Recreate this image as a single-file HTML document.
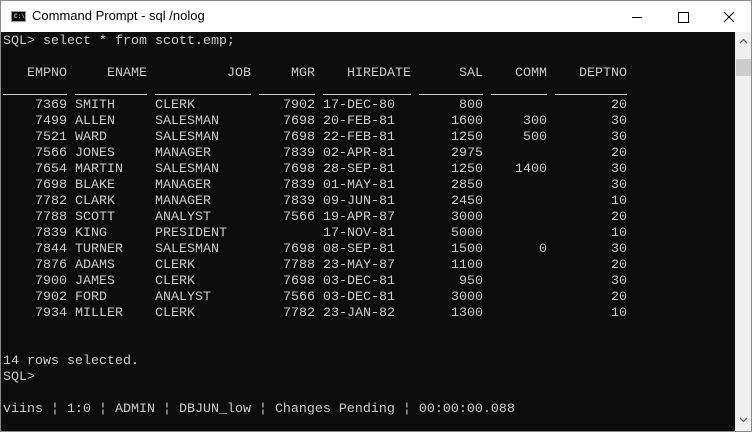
<!DOCTYPE html>
<html><head><meta charset="utf-8"><style>
html,body{margin:0;padding:0;width:752px;height:432px;overflow:hidden;background:#fff;}
#win{position:absolute;left:0;top:0;width:750px;height:430px;border:1px solid #8a8a8a;background:#fff;}
#title{position:absolute;left:0;top:0;width:750px;height:31px;background:#fff;}
#title .t{position:absolute;left:31px;top:7px;font:13px "Liberation Sans",sans-serif;color:#000;}
#icon{position:absolute;left:10px;top:10px;width:15px;height:11px;background:#000;border:1px solid #999;box-sizing:border-box;}
#icon span{position:absolute;left:2px;top:1px;font:bold 6px "Liberation Mono",monospace;color:#ddd;}
#term{position:absolute;left:0;top:31px;width:734px;height:399px;background:#0c0c0c;}
#sb{position:absolute;left:734px;top:31px;width:16px;height:399px;background:#f0f0f0;}
#thumb{position:absolute;left:1px;top:27px;width:15px;height:17px;background:#cdcdcd;}
.l{position:absolute;left:2px;height:16px;line-height:16px;font:13.33px "Liberation Mono",monospace;color:#cccccc;white-space:pre;}
.l span{display:inline-block;vertical-align:top;margin-right:8px;height:16px;}
.r{text-align:right}
.u span{height:13px;border-bottom:1px solid #ccc;}
</style></head><body>
<div id="win">
<div id="title"><div id="icon"><span>C:\</span></div><div class="t">Command Prompt - sql  /nolog</div>
<svg style="position:absolute;left:620px;top:6px" width="120" height="20">
<line x1="11" y1="10.5" x2="21" y2="10.5" stroke="#000" stroke-width="1"/>
<rect x="57.5" y="5.5" width="10" height="10" fill="none" stroke="#000"/>
<path d="M103 5 L113 15 M113 5 L103 15" stroke="#000" stroke-width="1"/>
</svg></div>
<div id="term">
<div class="l" style="top:2px">SQL&gt; select * from scott.emp;</div>
<div class="l" style="top:34px"><span class="r" style="width:64px">EMPNO</span><span class="r" style="width:72px">ENAME</span><span class="r" style="width:96px">JOB</span><span class="r" style="width:56px">MGR</span><span class="r" style="width:88px">HIREDATE</span><span class="r" style="width:64px">SAL</span><span class="r" style="width:56px">COMM</span><span class="r" style="width:72px">DEPTNO</span></div>
<div class="l u" style="top:49px"><span style="width:64px"></span><span style="width:72px"></span><span style="width:96px"></span><span style="width:56px"></span><span style="width:88px"></span><span style="width:64px"></span><span style="width:56px"></span><span style="width:72px"></span></div>
<div id="rows"></div>
<div class="l" style="top:322px">14 rows selected.</div>
<div class="l" style="top:338px">SQL&gt;</div>
<div class="l" style="top:370px">viins ¦ 1:0 ¦ ADMIN ¦ DBJUN_low ¦ Changes Pending ¦ 00:00:00.088</div>
</div>
<div id="sb"><div id="thumb"></div>
<svg style="position:absolute;left:4px;top:6px" width="9" height="6"><path d="M1 5 L4.5 1.5 L8 5" fill="none" stroke="#606060" stroke-width="1.3"/></svg>
<svg style="position:absolute;left:4px;top:385px" width="9" height="6"><path d="M1 1 L4.5 4.5 L8 1" fill="none" stroke="#606060" stroke-width="1.3"/></svg>
</div>
</div>
<script>
var d=[["7369","SMITH","CLERK","7902","17-DEC-80","800","","20"],
["7499","ALLEN","SALESMAN","7698","20-FEB-81","1600","300","30"],
["7521","WARD","SALESMAN","7698","22-FEB-81","1250","500","30"],
["7566","JONES","MANAGER","7839","02-APR-81","2975","","20"],
["7654","MARTIN","SALESMAN","7698","28-SEP-81","1250","1400","30"],
["7698","BLAKE","MANAGER","7839","01-MAY-81","2850","","30"],
["7782","CLARK","MANAGER","7839","09-JUN-81","2450","","10"],
["7788","SCOTT","ANALYST","7566","19-APR-87","3000","","20"],
["7839","KING","PRESIDENT","","17-NOV-81","5000","","10"],
["7844","TURNER","SALESMAN","7698","08-SEP-81","1500","0","30"],
["7876","ADAMS","CLERK","7788","23-MAY-87","1100","","20"],
["7900","JAMES","CLERK","7698","03-DEC-81","950","","30"],
["7902","FORD","ANALYST","7566","03-DEC-81","3000","","20"],
["7934","MILLER","CLERK","7782","23-JAN-82","1300","","10"]];
var w=[64,72,96,56,88,64,56,72],a=[1,0,0,1,0,1,1,1],h="";
d.forEach(function(r,i){h+='<div class="l" style="top:'+(66+16*i)+'px">';r.forEach(function(c,j){h+='<span'+(a[j]?' class="r"':'')+' style="width:'+w[j]+'px">'+c+'</span>';});h+='</div>';});
document.getElementById('rows').outerHTML=h;
</script>
</body></html>
